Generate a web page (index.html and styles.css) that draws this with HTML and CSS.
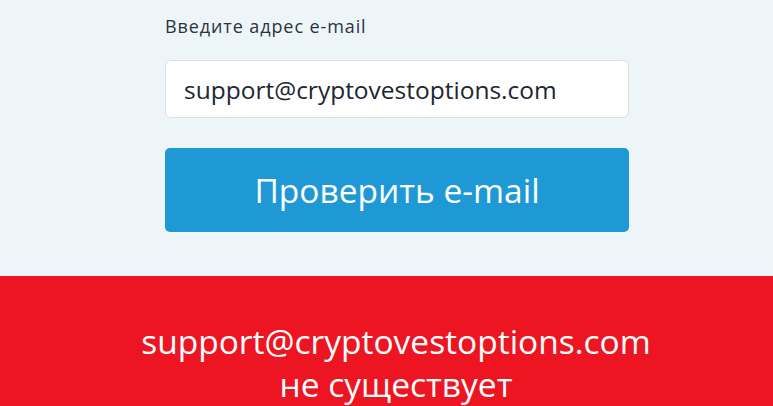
FILE: index.html
```html
<!DOCTYPE html>
<html lang="ru">
<head>
    <meta charset="UTF-8">
    <title>Проверка e-mail</title>
    <link rel="stylesheet" href="styles.css">
</head>
<body>
    <form class="check-form">
        <label class="field-label" for="email">Введите адрес e-mail</label>
        <input class="field-input" id="email" type="text" value="support@cryptovestoptions.com">
        <button class="check-btn" type="button">Проверить e-mail</button>
    </form>
    <div class="result">
        <p>support@cryptovestoptions.com<br>не существует</p>
    </div>
</body>
</html>
```

FILE: styles.css
```css
* { margin: 0; padding: 0; box-sizing: border-box; }
body {
    font-family: 'Open Sans', 'Noto Sans', sans-serif;
    background: #eef5f9;
    overflow: hidden;
    height: 406px;
}
.check-form {
    display: flex;
    flex-direction: column;
    width: 464px;
    margin-left: 165px;
    padding-top: 13px;
    height: 276px;
}
.field-label {
    color: #2a3440;
    font-size: 18px;
    font-weight: 500;
    letter-spacing: 0.9px;
    line-height: 26px;
    margin-bottom: 21px;
}
.field-input {
    font-family: inherit;
    height: 58px;
    border: 1px solid #dcdfe2;
    border-radius: 6px;
    background: #fff;
    padding: 0 18px;
    font-size: 24.5px;
    color: #1d2733;
    outline: none;
}
.check-btn {
    font-family: inherit;
    margin-top: 30px;
    height: 84px;
    border: none;
    border-radius: 5px;
    background: #1e99d6;
    color: #fff;
    font-size: 33.5px;
}
.result {
    background: #ee1522;
    height: 130px;
    display: flex;
    justify-content: center;
    padding: 44px 0 0 19px;
}
.result p {
    color: #fff;
    font-size: 33.5px;
    line-height: 43px;
    text-align: center;
}
```
